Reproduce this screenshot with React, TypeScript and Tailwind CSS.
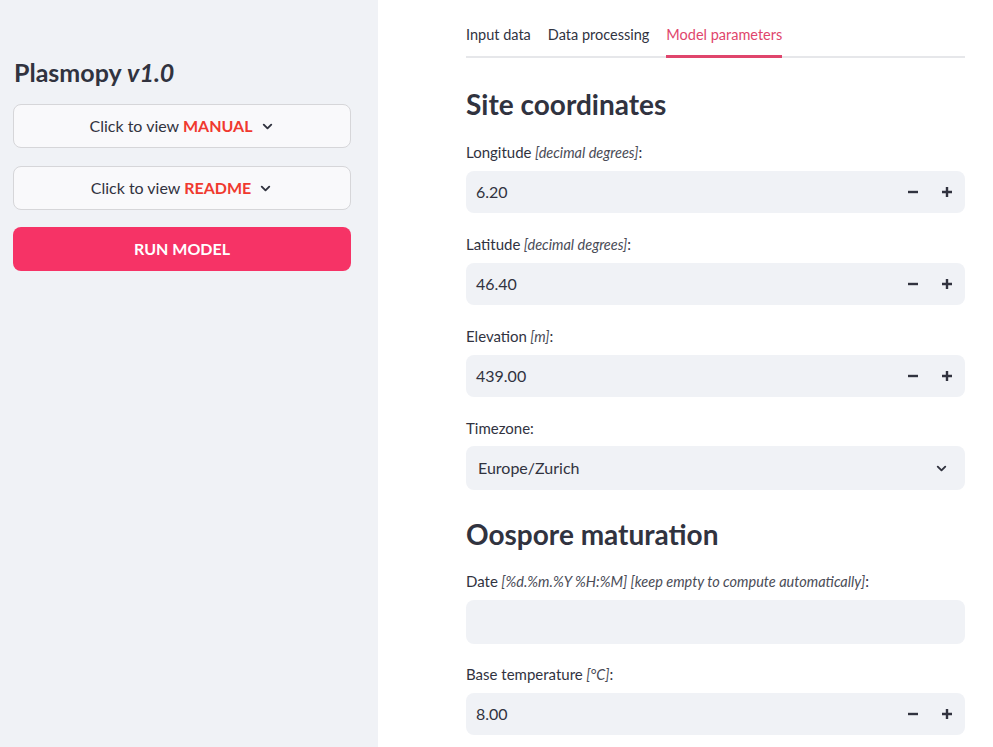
import React from 'react';

const font = { fontFamily: 'Lato, "Noto Sans", sans-serif' };

const Chevron: React.FC<{ className?: string }> = ({ className }) => (
  <svg viewBox="0 0 24 24" className={className} fill="none" stroke="currentColor" strokeWidth={3} strokeLinecap="round" strokeLinejoin="round">
    <path d="M6 9l6 6 6-6" />
  </svg>
);

const Expander: React.FC<{ word: string }> = ({ word }) => (
  <div className="h-[44px] w-full rounded-lg border border-[#d6d6d9] bg-[#f9f9fb] flex items-center justify-center gap-[7px] text-[16px] text-[#31333f]">
    <span>
      Click to view <b className="font-bold text-[#f0392f]">{word}</b>
    </span>
    <Chevron className="w-[15px] h-[15px] text-[#31333f]" />
  </div>
);

const Label: React.FC<{ name: string; unit?: string }> = ({ name, unit }) => (
  <div className="h-[20px] text-[15px] leading-[20px] text-[#31333f]">
    {name}
    {unit && <i className="text-[14.5px] text-[#4a4c57]"> {unit}</i>}:
  </div>
);

const NumberInput: React.FC<{ name: string; unit?: string; value: string }> = ({ name, unit, value }) => (
  <div className="flex flex-col">
    <Label name={name} unit={unit} />
    <div className="mt-[9px] h-[42px] rounded-lg bg-[#f0f2f6] flex items-center pl-[10px] pr-[12px]">
      <span className="flex-1 text-[16px] text-[#31333f]">{value}</span>
      <div className="flex items-center gap-[22px] text-[#31333f]">
        <svg width="12" height="12" viewBox="0 0 12 12"><path d="M1 6h10" stroke="currentColor" strokeWidth="2.4" /></svg>
        <svg width="12" height="12" viewBox="0 0 12 12"><path d="M1 6h10M6 1v10" stroke="currentColor" strokeWidth="2.4" /></svg>
      </div>
    </div>
  </div>
);

const App: React.FC = () => {
  return (
    <div className="flex w-[993px] h-[747px] overflow-hidden bg-white" style={font}>
      {/* sidebar */}
      <aside className="w-[378px] shrink-0 bg-[#f0f2f6] px-[13px] pt-[56px]">
        <h1 className="pl-[1px] text-[25px] leading-[32px] font-bold text-[#31333f]">
          Plasmopy <i className="font-bold">v1.0</i>
        </h1>
        <div className="mt-[16px] w-[338px] flex flex-col gap-[18px]">
          <Expander word="MANUAL" />
          <Expander word="README" />
        </div>
        <button className="mt-[17px] w-[338px] h-[44px] rounded-lg bg-[#f63366] text-white text-[16px] font-bold">
          RUN MODEL
        </button>
      </aside>

      {/* main */}
      <main className="flex-1 pl-[88px] pr-[28px]">
        <div className="w-[499px]">
          <div className="mt-[24px] flex gap-[17px] border-b-2 border-[#e6e7ea] text-[14.5px] text-[#31333f]">
            <div className="pb-[10px] leading-[22px]">Input data</div>
            <div className="pb-[10px] leading-[22px]">Data processing</div>
            <div className="pb-[8px] leading-[22px] text-[#e0456c] border-b-[3px] border-[#e0456c] -mb-[2px]">Model parameters</div>
          </div>

          <h2 className="mt-[28px] text-[28px] leading-[36px] font-bold text-[#31333f]">Site coordinates</h2>

          <div className="mt-[20px] flex flex-col gap-[21px]">
            <NumberInput name="Longitude" unit="[decimal degrees]" value="6.20" />
            <NumberInput name="Latitude" unit="[decimal degrees]" value="46.40" />
            <NumberInput name="Elevation" unit="[m]" value="439.00" />
            <div className="flex flex-col">
              <Label name="Timezone" />
              <div className="mt-[8px] h-[44px] rounded-lg bg-[#f0f2f6] flex items-center pl-[12px] pr-[16px]">
                <span className="flex-1 text-[16px] text-[#31333f]">Europe/Zurich</span>
                <Chevron className="w-[15px] h-[15px] text-[#31333f]" />
              </div>
            </div>
          </div>

          <h2 className="mt-[26px] text-[28px] leading-[36px] font-bold text-[#31333f]">Oospore maturation</h2>

          <div className="mt-[19px] flex flex-col gap-[20px]">
            <div className="flex flex-col">
              <Label name="Date" unit="[%d.%m.%Y %H:%M] [keep empty to compute automatically]" />
              <div className="mt-[9px] h-[44px] rounded-lg bg-[#f0f2f6]" />
            </div>
            <NumberInput name="Base temperature" unit="[°C]" value="8.00" />
          </div>
        </div>
      </main>
    </div>
  );
};

export default App;
